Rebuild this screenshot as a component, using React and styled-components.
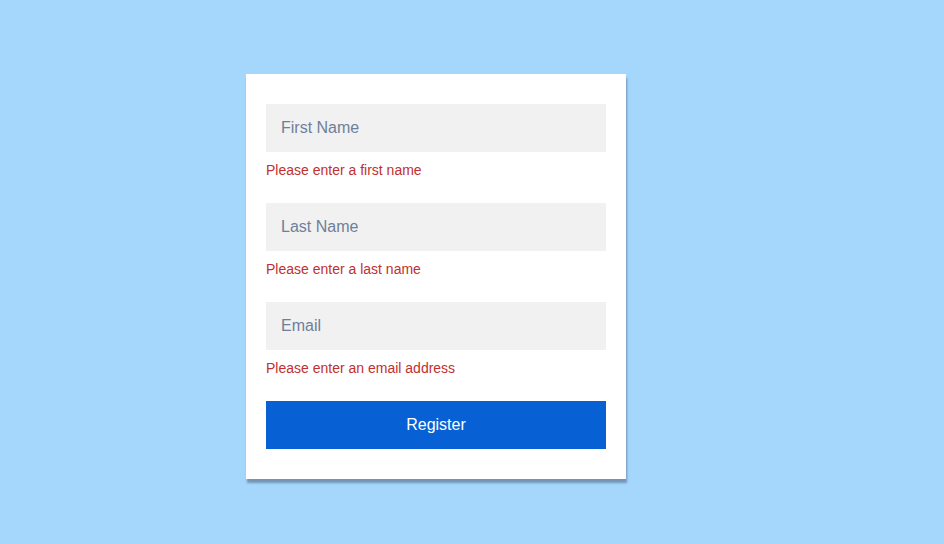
import React from "react";
import styled, { createGlobalStyle } from "styled-components";

const GlobalStyle = createGlobalStyle`
  html, body {
    margin: 0;
    padding: 0;
    background: #a5d6fb;
    font-family: "Liberation Sans", Arial, sans-serif;
  }
  body {
    min-height: 544px;
  }
`;

const Page = styled.div`
  padding: 74px 0 0 246px;
`;

const Card = styled.form`
  width: 340px;
  padding: 30px 20px 30px;
  background: #ffffff;
  box-shadow: 1px 4px 2px rgba(85, 105, 135, 0.6);
`;

const Field = styled.div`
  margin-bottom: 23px;
`;

const Input = styled.input`
  display: block;
  box-sizing: border-box;
  width: 100%;
  height: 48px;
  padding: 0 15px;
  border: none;
  outline: none;
  background: #f1f1f1;
  font-family: inherit;
  font-size: 16px;
  color: #333;

  &::placeholder {
    color: #6f7f99;
  }
`;

const Error = styled.div`
  margin-top: 8px;
  line-height: 20px;
  font-size: 14px;
  color: #c0302f;
`;

const Button = styled.button`
  display: block;
  width: 100%;
  height: 48px;
  border: none;
  background: #0761d4;
  color: #ffffff;
  font-family: inherit;
  font-size: 16px;
  cursor: pointer;
`;

const fields = [
  { name: "firstName", placeholder: "First Name", error: "Please enter a first name" },
  { name: "lastName", placeholder: "Last Name", error: "Please enter a last name" },
  { name: "email", placeholder: "Email", error: "Please enter an email address" },
];

const App = () => {
  return (
    <Page>
      <GlobalStyle />
      <Card onSubmit={(e) => e.preventDefault()}>
        {fields.map((f) => (
          <Field key={f.name}>
            <Input name={f.name} placeholder={f.placeholder} />
            <Error>{f.error}</Error>
          </Field>
        ))}
        <Button type="submit">Register</Button>
      </Card>
    </Page>
  );
};

export default App;
